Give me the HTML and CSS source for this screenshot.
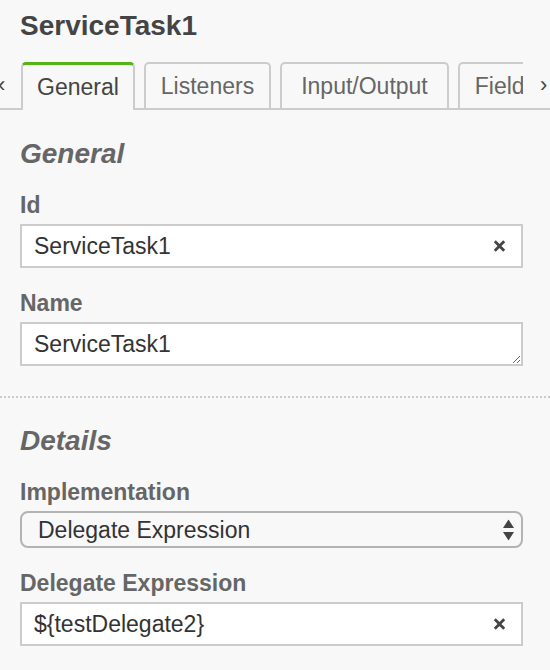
FILE: index.html
```html
<!DOCTYPE html>
<html lang="en">
<head>
<meta charset="utf-8">
<title>ServiceTask1</title>
<link rel="stylesheet" href="styles.css">
</head>
<body>
<div class="panel">
  <header class="header">
    <h1 class="title">ServiceTask1</h1>
  </header>

  <nav class="tabbar">
    <span class="scroll scroll-left">‹</span>
    <div class="tabs">
      <a class="tab active">General</a>
      <a class="tab tab-listeners">Listeners</a>
      <a class="tab tab-io">Input/Output</a>
      <a class="tab tab-field">Field</a>
    </div>
    <span class="scroll scroll-right">›</span>
  </nav>

  <section class="group">
    <h2 class="group-title">General</h2>
    <div class="field">
      <label class="label">Id</label>
      <div class="control">
        <input class="input" type="text" value="ServiceTask1">
        <button class="clear" type="button" aria-label="Clear">
          <svg width="13" height="13" viewBox="0 0 13 13"><path d="M1.8 1.8 L11.2 11.2 M11.2 1.8 L1.8 11.2" stroke="#444" stroke-width="2.8" fill="none"/></svg>
        </button>
      </div>
    </div>
    <div class="field">
      <label class="label">Name</label>
      <textarea class="textarea">ServiceTask1</textarea>
    </div>
  </section>

  <section class="group group-sep">
    <h2 class="group-title">Details</h2>
    <div class="field">
      <label class="label">Implementation</label>
      <div class="control">
        <select class="select">
          <option>Delegate Expression</option>
        </select>
        <svg class="select-arrows" width="11" height="21" viewBox="0 0 11 21"><path d="M5.5 0 L11 8.5 L0 8.5 Z M0 12.5 L11 12.5 L5.5 21 Z" fill="#444"/></svg>
      </div>
    </div>
    <div class="field">
      <label class="label">Delegate Expression</label>
      <div class="control">
        <input class="input" type="text" value="${testDelegate2}">
        <button class="clear" type="button" aria-label="Clear">
          <svg width="13" height="13" viewBox="0 0 13 13"><path d="M1.8 1.8 L11.2 11.2 M11.2 1.8 L1.8 11.2" stroke="#444" stroke-width="2.8" fill="none"/></svg>
        </button>
      </div>
    </div>
  </section>
</div>
</body>
</html>
```

FILE: styles.css
```css
* {
  box-sizing: border-box;
}

html, body {
  margin: 0;
  padding: 0;
  background: #f8f8f8;
}

body {
  font-family: "Liberation Sans", Arial, sans-serif;
  color: #333;
}

.panel {
  width: 550px;
  overflow: hidden;
}

.header {
  padding: 10px 20px 0 20px;
}

.title {
  margin: 0;
  font-size: 28px;
  line-height: 32px;
  font-weight: bold;
  color: #444;
}

.tabbar {
  margin-top: 20px;
  height: 48px;
  display: flex;
  background: linear-gradient(to top, #ccc 2px, transparent 2px);
}

.scroll {
  font-size: 22px;
  line-height: 46px;
  color: #444;
}

.scroll-left {
  width: 21px;
  margin-left: -2px;
}

.scroll-right {
  width: 27px;
  padding-left: 17px;
}

.tabs {
  width: 502px;
  height: 48px;
  overflow: hidden;
  display: flex;
  align-items: flex-start;
  gap: 9px;
  margin-left: 2px;
}

.tab {
  flex: none;
  height: 46px;
  padding: 0 14px;
  display: flex;
  align-items: center;
  border: 2px solid #ccc;
  border-bottom: 0;
  border-radius: 5px 5px 0 0;
  font-size: 23px;
  color: #666;
  white-space: nowrap;
}

.tab-listeners {
  padding: 0 15px;
}

.tab-io {
  padding: 0 19px;
}

.tab-field {
  padding: 0 60px 0 15px;
}

.tab.active {
  height: 48px;
  border-top: 3px solid #52b415;
  background: #f8f8f8;
  color: #444;
}

.group {
  padding: 28px 27px 30px 20px;
}

.group-sep {
  border-top: 2px dotted #ccc;
  padding-top: 27px;
}

.group-title {
  margin: 0;
  font-size: 28px;
  line-height: 32px;
  font-weight: bold;
  font-style: italic;
  color: #666;
}

.field {
  margin-top: 22px;
}

.label {
  display: block;
  font-size: 23px;
  line-height: 26px;
  font-weight: bold;
  color: #666;
  margin-bottom: 6px;
}

.control {
  position: relative;
}

.input {
  display: block;
  width: 100%;
  height: 44px;
  margin: 0;
  border: 2px solid #ccc;
  border-radius: 0;
  background: #fff;
  padding: 0 40px 0 12px;
  font-family: "Liberation Sans", Arial, sans-serif;
  font-size: 23px;
  color: #333;
  outline: none;
}

.clear {
  position: absolute;
  right: 17px;
  top: 50%;
  transform: translateY(-50%);
  width: 13px;
  height: 13px;
  padding: 0;
  margin: 0;
  border: 0;
  background: none;
  display: block;
}

.clear svg {
  display: block;
}

.textarea {
  display: block;
  width: 100%;
  height: 44px;
  margin: 0;
  border: 2px solid #ccc;
  border-radius: 0;
  background: #fff;
  padding: 7px 12px;
  font-family: "Liberation Sans", Arial, sans-serif;
  font-size: 23px;
  line-height: 26px;
  color: #333;
  resize: vertical;
  overflow: hidden;
  outline: none;
}

.select {
  display: block;
  width: 100%;
  height: 37px;
  margin: 0;
  border: 2px solid #b3b3b3;
  border-radius: 8px;
  background: #f8f8f8;
  padding: 0 40px 0 16px;
  font-family: "Liberation Sans", Arial, sans-serif;
  font-size: 23px;
  color: #333;
  -webkit-appearance: none;
  appearance: none;
  outline: none;
}

.select-arrows {
  position: absolute;
  right: 9px;
  top: 50%;
  transform: translateY(-50%);
  display: block;
  pointer-events: none;
}
```
